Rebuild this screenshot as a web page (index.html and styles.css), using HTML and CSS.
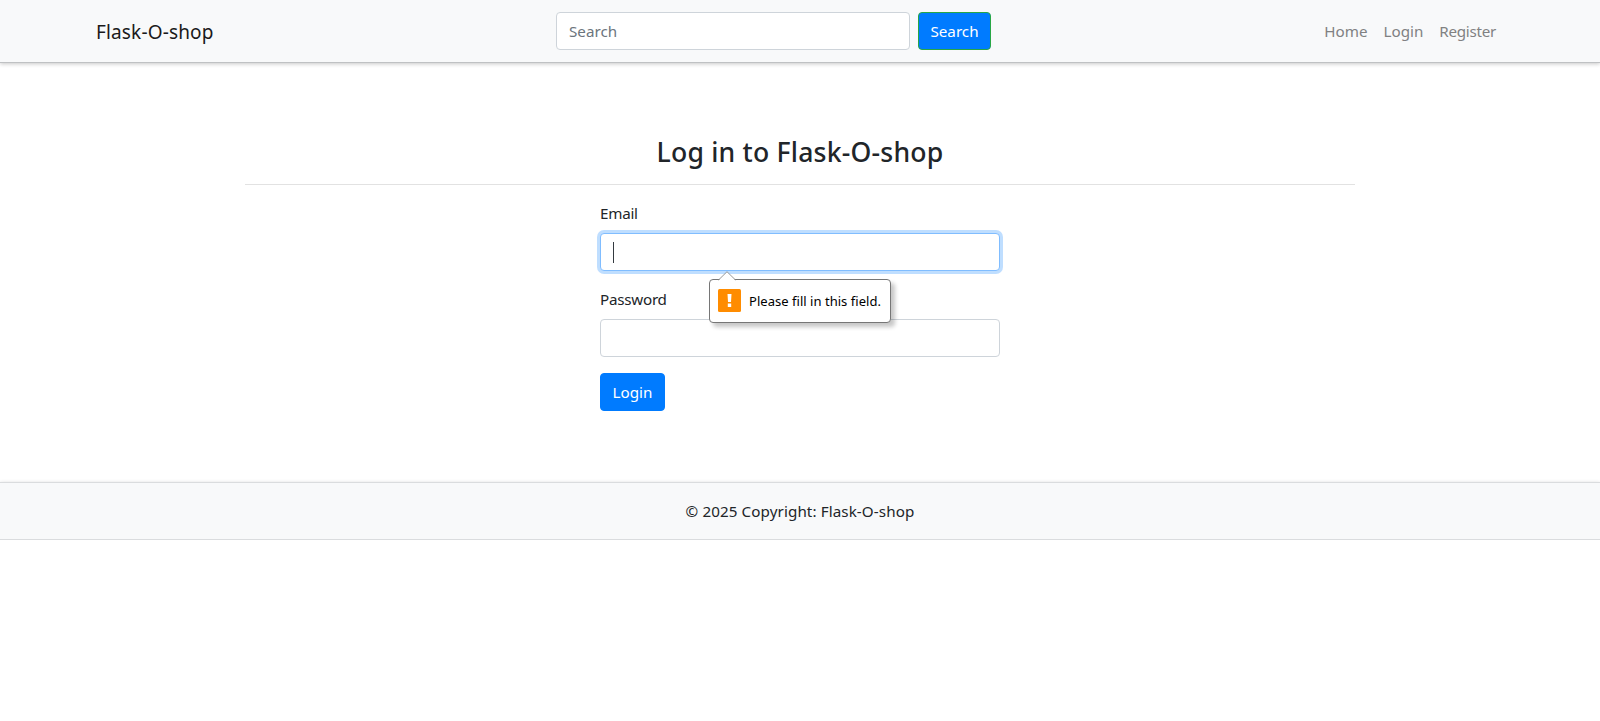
FILE: index.html
```html
<!DOCTYPE html>
<html lang="en">
<head>
<meta charset="utf-8">
<title>Flask-O-shop</title>
<link rel="stylesheet" href="styles.css">
</head>
<body>
<nav class="navbar">
  <a class="brand" href="#">Flask-O-shop</a>
  <form class="search">
    <input class="control search-input" type="search" placeholder="Search">
    <button class="btn btn-search" type="button">Search</button>
  </form>
  <div class="links">
    <a class="link-home" href="#">Home</a>
    <a class="link-login" href="#">Login</a>
    <a class="link-register" href="#">Register</a>
  </div>
</nav>
<main class="content">
  <h3 class="title"><span>Log in to Flask-O-shop</span></h3>
  <hr class="rule">
  <form class="login">
    <div class="group">
      <label class="label-email">Email</label>
      <div class="control focused">
        <span class="caret"></span>
        <div class="tooltip">
          <svg class="pointer" width="18" height="10" viewBox="0 0 18 10"><path d="M0 10L1 9L9 1L17 9L18 10Z" fill="#fff"/><path d="M.5 9L9 .7L17.5 9" fill="none" stroke="#999"/></svg>
          <svg class="warn" width="23" height="23" viewBox="0 0 23 23"><rect width="23" height="23" rx="1.5" fill="#ff8c00"/><path d="M9.5 5H13.5L13 13H10ZM9.8 14.5H13.2V18H9.8Z" fill="#fff"/></svg>
          <span class="tip-text">Please fill in this field.</span>
        </div>
      </div>
    </div>
    <div class="group">
      <label class="label-password">Password</label>
      <div class="control"></div>
    </div>
    <button class="btn btn-login" type="button">Login</button>
  </form>
</main>
<footer class="footer"><span>© 2025 Copyright: Flask-O-shop</span></footer>
</body>
</html>
```
FILE: styles.css
```css
* { box-sizing: border-box; }
body {
  margin: 0;
  background: #fff;
  color: #212529;
  font: 15.2px/24px "Segoe UI", "Noto Sans", sans-serif;
}
a { color: inherit; text-decoration: none; }
.navbar {
  height: 62px;
  padding: 0 104px 0 96px;
  display: grid;
  grid-template-columns: 460px 435px 1fr;
  align-items: center;
  background: #f8f9fa;
  box-shadow: 0 1px 0 #bfc1c3, 0 2px 4px rgba(0, 0, 0, .22);
}
.brand { padding-top: 2px; font-size: 19px; line-height: 30px; letter-spacing: .15px; color: #1a1a1a; }
.search { display: flex; gap: 8px; }
.control {
  height: 38px;
  width: 100%;
  padding: 6px 12px;
  border: 1px solid #ced4da;
  border-radius: 4px;
  background: #fff;
  font: inherit;
}
.search-input { width: 354px; appearance: none; outline: none; }
.search-input::placeholder { color: #6c757d; opacity: 1; }
.btn {
  height: 38px;
  padding: 0;
  border: 1px solid #007bff;
  border-radius: 4px;
  background: #007bff;
  color: #fff;
  font: inherit;
  text-align: center;
}
.btn-search { width: 73px; border-color: #28a745; }
.btn-login { width: 65px; display: block; }
.links { display: flex; justify-content: flex-end; gap: 16px; color: #808182; }
.link-register { letter-spacing: -.27px; }
.content { height: 420px; padding: 73px 245px 0; }
.title { margin: 0; font-size: 26.6px; line-height: 34px; font-weight: 500; letter-spacing: .2px; text-align: center; }
.rule { margin: 15px 0 16px; border: 0; border-top: 1px solid #e2e2e2; }
.login { width: 400px; margin: 0 auto; }
.group { margin-bottom: 16px; }
.group label { display: block; margin-bottom: 8px; letter-spacing: -.25px; }
.focused {
  position: relative;
  border-color: #80bdff;
  box-shadow: 0 0 0 3px rgba(0, 123, 255, .25);
}
.caret { display: block; width: 1px; height: 21px; margin-top: 2px; background: #343a40; }
.tooltip {
  position: absolute;
  z-index: 2;
  left: 108px;
  top: 45px;
  width: 182px;
  height: 44px;
  padding: 0 8px;
  display: flex;
  align-items: center;
  gap: 8px;
  border: 1px solid #767676;
  border-radius: 4px;
  background: #fff;
  box-shadow: 4px 4px 4px rgba(0, 0, 0, .22);
  color: #000;
}
.pointer { position: absolute; left: 8px; top: -9px; }
.warn { position: relative; top: -1px; flex: none; }
.tip-text { font-size: 13px; letter-spacing: .03px; white-space: nowrap; }
.footer {
  height: 58px;
  display: flex;
  align-items: center;
  justify-content: center;
  background: #f8f9fa;
  border: solid #dadcde;
  border-width: 1px 0;
  box-shadow: 0 1px 4px rgba(0, 0, 0, .2);
  letter-spacing: .1px;
}
```
